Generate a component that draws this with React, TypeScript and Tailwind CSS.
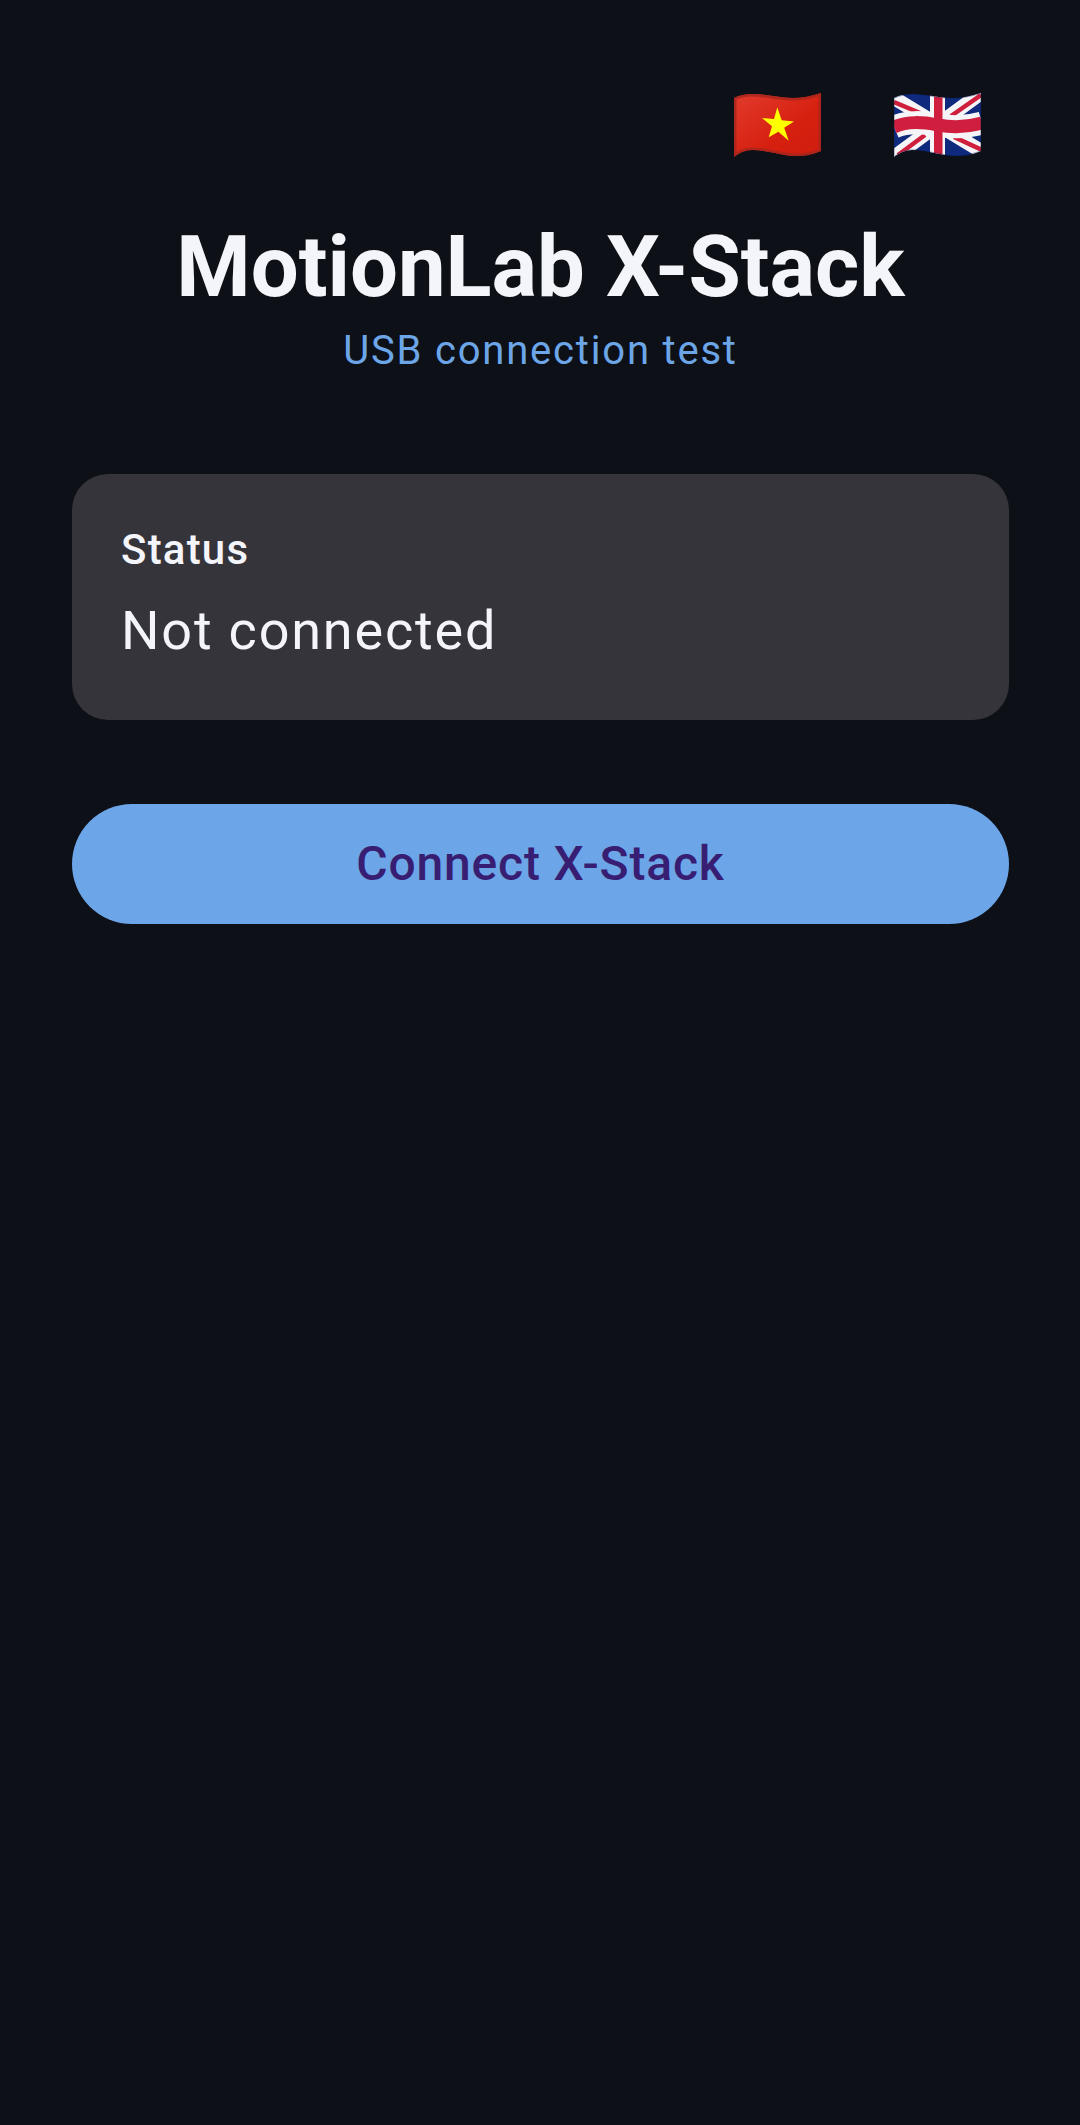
import React from "react";

const FLAG_SHAPE =
  "M0 5 C6 2 12 1 18 1 C32 1 44 5 58 5 C68 5 78 3 87 0 L87 58 C78 62 70 63 62 63 C48 63 34 57 18 57 C11 57 5 60 0 64 Z";

function FlagVN() {
  return (
    <svg width="88" height="65" viewBox="0 0 88 65" className="block">
      <defs>
        <clipPath id="vn-clip">
          <path d={FLAG_SHAPE} />
        </clipPath>
        <linearGradient id="vn-fill" x1="0" y1="0" x2="1" y2="1">
          <stop offset="0" stopColor="#e23b2e" />
          <stop offset="0.6" stopColor="#d6200f" />
          <stop offset="1" stopColor="#cf1d10" />
        </linearGradient>
      </defs>
      <g clipPath="url(#vn-clip)">
        <rect width="88" height="65" fill="url(#vn-fill)" />
        <path d={FLAG_SHAPE} fill="none" stroke="#a8261c" strokeWidth="5" opacity="0.85" />
      </g>
      <polygon
        points="43.3,14.3 47.7,27.3 60,28.6 50.2,34.7 54.7,47.7 44.4,38.8 34.7,44.3 38,33.3 28,25 40,26"
        fill="#ffff00"
      />
    </svg>
  );
}

function FlagUK() {
  return (
    <svg width="88" height="65" viewBox="0 0 88 65" className="block">
      <defs>
        <clipPath id="uk-clip">
          <path d={FLAG_SHAPE} />
        </clipPath>
      </defs>
      <g clipPath="url(#uk-clip)">
        <rect width="88" height="65" fill="#0f2a7d" />
        <path d="M0 5 L87 58 M87 0 L0 64" stroke="#f5f5f7" strokeWidth="14" fill="none" />
        <path
          d="M0 9 L26 20 M4 62 L31 42 M87 2 L57 23 M60 44 L88 57"
          stroke="#cf1f3d"
          strokeWidth="4.5"
          fill="none"
        />
        <path d="M0 34 C14 28 28 29 44 32 C60 35 74 34 88 30" stroke="#f5f5f7" strokeWidth="23" fill="none" />
        <rect x="36" y="0" width="15" height="65" fill="#f5f5f7" />
        <path d="M0 34 C14 28 28 29 44 32 C60 35 74 34 88 30" stroke="#d01f3e" strokeWidth="13" fill="none" />
        <rect x="40" y="0" width="8.5" height="65" fill="#d01f3e" />
        <path d={FLAG_SHAPE} fill="none" stroke="#0a1c55" strokeWidth="1.5" opacity="0.35" />
      </g>
    </svg>
  );
}

export default function App() {
  return (
    <div className="min-h-[2125px] bg-[#0d1117] pl-[72px] pr-[71px] pt-[93px] font-['Roboto',sans-serif]">
      <div className="flex justify-end gap-[72px] pr-[27px]">
        <FlagVN />
        <FlagUK />
      </div>
      <h1 className="mt-[53px] text-center text-[85px] leading-[112px] font-bold text-[#f4f5fa]">
        MotionLab X-Stack
      </h1>
      <p className="-mt-[2px] text-center text-[40px] leading-[60px] tracking-[1.8px] text-[#6ca6e8]">
        USB connection test
      </p>
      <div className="mt-[93px] h-[246px] rounded-[36px] bg-[#36343b] px-[49px] pt-[48px]">
        <div className="text-[42px] leading-[56px] font-medium tracking-[1.2px] text-[#f4f5fa]">Status</div>
        <div className="mt-[17px] text-[54px] leading-[72px] tracking-[1.8px] text-[#f4f5fa]">Not connected</div>
      </div>
      <button className="mt-[84px] flex h-[120px] w-full items-center justify-center rounded-full bg-[#6ca6e8] text-[48px] font-medium tracking-[0.8px] text-[#381e72]">
        Connect X-Stack
      </button>
    </div>
  );
}
